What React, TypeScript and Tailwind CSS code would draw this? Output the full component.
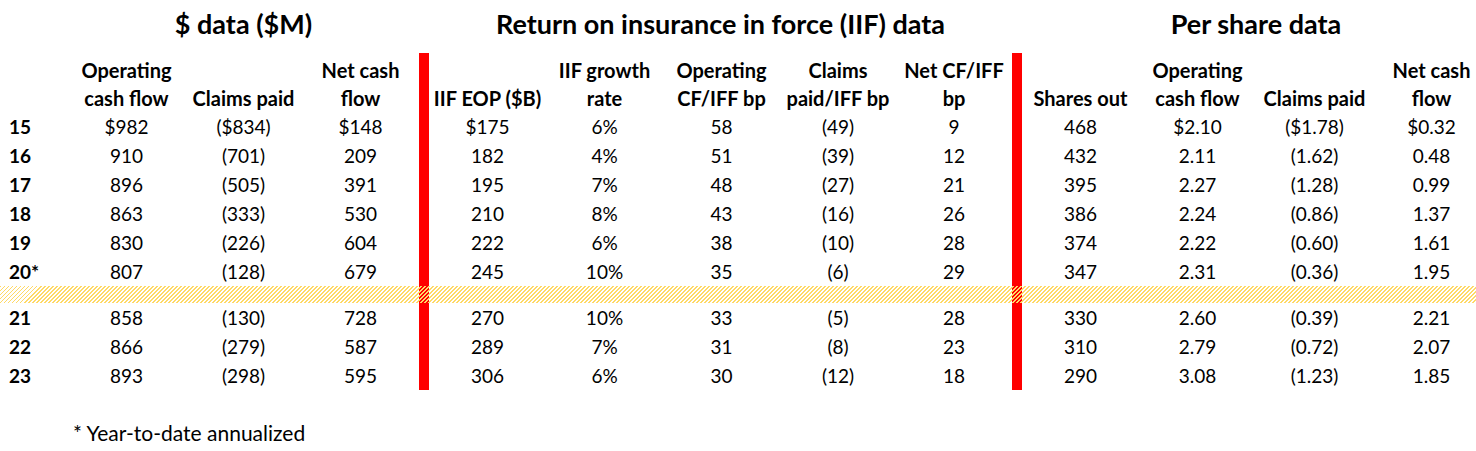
import React from "react";

const rows = [
  ["15", "$982", "($834)", "$148", "$175", "6%", "58", "(49)", "9", "468", "$2.10", "($1.78)", "$0.32"],
  ["16", "910", "(701)", "209", "182", "4%", "51", "(39)", "12", "432", "2.11", "(1.62)", "0.48"],
  ["17", "896", "(505)", "391", "195", "7%", "48", "(27)", "21", "395", "2.27", "(1.28)", "0.99"],
  ["18", "863", "(333)", "530", "210", "8%", "43", "(16)", "26", "386", "2.24", "(0.86)", "1.37"],
  ["19", "830", "(226)", "604", "222", "6%", "38", "(10)", "28", "374", "2.22", "(0.60)", "1.61"],
  ["20*", "807", "(128)", "679", "245", "10%", "35", "(6)", "29", "347", "2.31", "(0.36)", "1.95"],
];

const projected = [
  ["21", "858", "(130)", "728", "270", "10%", "33", "(5)", "28", "330", "2.60", "(0.39)", "2.21"],
  ["22", "866", "(279)", "587", "289", "7%", "31", "(8)", "23", "310", "2.79", "(0.72)", "2.07"],
  ["23", "893", "(298)", "595", "306", "6%", "30", "(12)", "18", "290", "3.08", "(1.23)", "1.85"],
];

const headers = [
  ["Operating", "cash flow"],
  ["", "Claims paid"],
  ["Net cash", "flow"],
  ["", "IIF EOP ($B)"],
  ["IIF growth", "rate"],
  ["Operating", "CF/IFF bp"],
  ["Claims", "paid/IFF bp"],
  ["Net CF/IFF", "bp"],
  ["", "Shares out"],
  ["Operating", "cash flow"],
  ["", "Claims paid"],
  ["Net cash", "flow"],
];

// data cells are auto-placed; the red bars occupy cols 5 and 11 so they get skipped
function DataRow({ row }: { row: string[] }) {
  const [year, ...vals] = row;
  return (
    <>
      <div className="h-[29px] pl-[9px] font-bold leading-[29px]">{year}</div>
      {vals.map((v, i) => (
        <div key={i} className="h-[29px] text-center leading-[29px]">
          {v}
        </div>
      ))}
    </>
  );
}

export default function App() {
  return (
    <div className="h-[451px] w-[1476px] overflow-hidden bg-white font-['Lato',sans-serif] text-[19px] text-black">
      <div className="grid grid-cols-[68px_117px_117px_117px_10px_117px_117px_117px_116px_116px_10px_117px_117px_117px_117px]">
        <div className="h-[53px]" />
        <div className="col-span-3 pt-[6px] text-center text-[27px] leading-[36px] font-bold">$ data ($M)</div>
        <div />
        <div className="col-span-5 pt-[6px] text-center text-[27px] leading-[36px] font-bold whitespace-nowrap">
          Return on insurance in force (IIF) data
        </div>
        <div />
        <div className="col-span-4 pt-[6px] text-center text-[27px] leading-[36px] font-bold">Per share data</div>

        <div className="row-span-11 col-start-5 row-start-2 bg-[#ff0000]" />
        <div className="row-span-11 col-start-11 row-start-2 bg-[#ff0000]" />

        <div className="col-start-1 row-start-2" />
        {headers.map((h, i) => (
          <div
            key={i}
            className="row-start-2 pt-[3px] text-center text-[20px] leading-[28px] font-bold"
            style={{ gridColumnStart: i < 3 ? i + 2 : i < 8 ? i + 3 : i + 4 }}
          >
            <div className="h-[28px] whitespace-nowrap">{h[0]}</div>
            <div className="h-[28px] whitespace-nowrap">{h[1]}</div>
          </div>
        ))}

        {rows.map((r) => (
          <DataRow key={r[0]} row={r} />
        ))}

        <div className="col-span-full row-start-9 h-[17px] bg-[repeating-linear-gradient(135deg,#ffd966_0_1.4px,transparent_1.4px_2.83px)]" />

        {projected.map((r) => (
          <DataRow key={r[0]} row={r} />
        ))}
      </div>
      <div className="mt-[28px] pl-[73px] text-[21px] leading-[29px]">* Year-to-date annualized</div>
    </div>
  );
}
